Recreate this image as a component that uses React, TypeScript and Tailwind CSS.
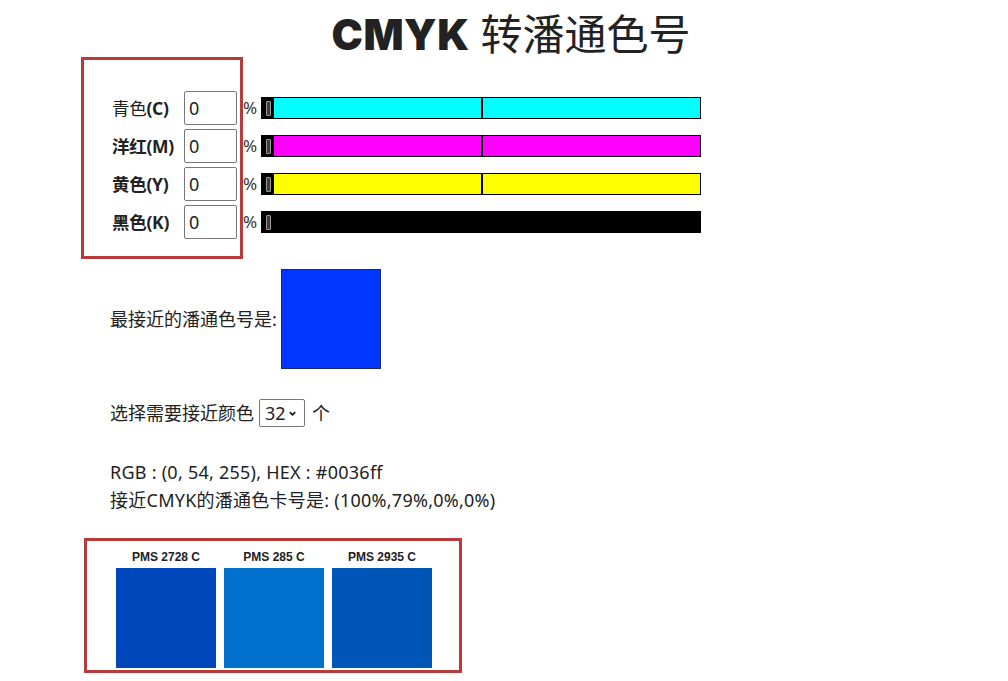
import React from "react";

const font = { fontFamily: '"Noto Sans", "Noto Sans CJK SC", sans-serif' };

const channels = [
  { zh: "青色", key: "C", boldZh: false, color: "bg-[#00ffff]", mid: true },
  { zh: "洋红", key: "M", boldZh: true, color: "bg-[#ff00ff]", mid: true },
  { zh: "黄色", key: "Y", boldZh: true, color: "bg-[#ffff00]", mid: true },
  { zh: "黑色", key: "K", boldZh: true, color: "bg-black", mid: false },
];

const swatches = [
  { name: "PMS 2728 C", color: "bg-[#0047bb]" },
  { name: "PMS 285 C", color: "bg-[#0070cc]" },
  { name: "PMS 2935 C", color: "bg-[#0056b6]" },
];

function Slider({ color, mid }: { color: string; mid: boolean }) {
  return (
    <div className={`relative w-[440px] h-[22px] border border-black ${color}`}>
      {mid && <div className="absolute left-[219px] top-0 h-full w-[2px] bg-black" />}
      <div className="absolute left-0 top-0 h-full w-[12px] bg-black flex items-center justify-center">
        <div className="w-[5px] h-[15px] border border-[#9a9a9a] bg-[#3d3d3d] rounded-[1px]" />
      </div>
    </div>
  );
}

export default function App() {
  return (
    <div className="w-full min-h-[681px] bg-white text-[#222]" style={font}>
      <h1 className="text-center pl-[14px] pt-[8px] h-[57px] text-[42px] leading-[48px] text-[#222]">
        <span
          className="font-black tracking-[0.5px]"
          style={{ fontFamily: '"Inter", "Liberation Sans", sans-serif' }}
        >
          CMYK
        </span>{" "}
        <span className="font-normal" style={{ fontFamily: '"Noto Sans CJK SC", sans-serif' }}>
          转潘通色号
        </span>
      </h1>

      <div className="flex ml-[81px]">
        <div className="w-[162px] h-[202px] border-[3px] border-[#b83b3c] pt-[29px] pl-[28px]">
          {channels.map((c) => (
            <div key={c.key} className="h-[38px] flex items-center text-[17.5px]">
              <span className="w-[72px] whitespace-nowrap tracking-[-0.3px]">
                <span className={c.boldZh ? "font-bold" : ""}>{c.zh}</span>
                <span className="font-bold">({c.key})</span>
              </span>
              <div className="w-[53px] h-[34px] border border-[#777] rounded-[2px] flex items-center pl-[4px] text-[18px] shrink-0">
                0
              </div>
            </div>
          ))}
        </div>
        <div className="pt-[32px]">
          {channels.map((c) => (
            <div key={c.key} className="h-[38px] flex items-center">
              <span className="w-[18px] text-[17px] text-[#333]">%</span>
              <Slider color={c.color} mid={c.mid} />
            </div>
          ))}
        </div>
      </div>

      <div className="ml-[110px] mt-[10px] flex items-center text-[18px]">
        <span>最接近的潘通色号是:</span>
        <div className="ml-[4px] w-[100px] h-[100px] bg-[#0036ff] border border-[#1a2a6a]" />
      </div>

      <div className="ml-[110px] mt-[30px] flex items-center text-[18px] h-[28px]">
        <span>选择需要接近颜色</span>
        <div className="ml-[5px] w-[46px] h-[28px] border border-[#777] rounded-[2px] flex items-center pl-[5px] text-[18px]">
          <span>32</span>
          <svg viewBox="0 0 10 10" className="w-[9px] h-[9px] ml-[2px]">
            <path d="M2 3.5 L5 6.5 L8 3.5" fill="none" stroke="#111" strokeWidth="1.8" />
          </svg>
        </div>
        <span className="ml-[7px]">个</span>
      </div>

      <div className="ml-[110px] mt-[31px] text-[18px] leading-[28px]">
        <div className="tracking-[0.25px]">RGB : (0, 54, 255), HEX : #0036ff</div>
        <div className="tracking-[0.25px]">接近CMYK的潘通色卡号是: (100%,79%,0%,0%)</div>
      </div>

      <div className="ml-[84px] mt-[24px] w-[378px] h-[135px] border-[3px] border-[#b83b3c] pl-[29px] pt-[5px] flex gap-[8px]">
        {swatches.map((s) => (
          <div key={s.name} className="flex flex-col items-center">
            <div
              className="h-[22px] leading-[22px] text-[12px] font-bold text-[#222]"
              style={{ fontFamily: '"Liberation Sans", Arial, sans-serif' }}
            >
              {s.name}
            </div>
            <div className={`w-[100px] h-[100px] ${s.color}`} />
          </div>
        ))}
      </div>
    </div>
  );
}
